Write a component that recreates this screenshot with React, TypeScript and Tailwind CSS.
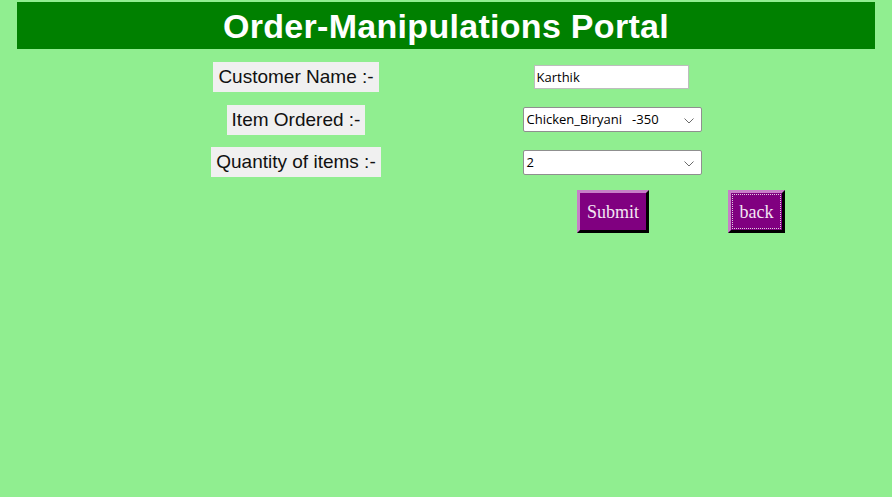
import React from 'react';

const Chevron = () => (
  <svg width="10" height="6" viewBox="0 0 10 6" className="absolute right-[7px] top-[10px]">
    <path d="M0.5 0.5 L5 5 L9.5 0.5" fill="none" stroke="#6b6b6b" strokeWidth="1" />
  </svg>
);

const Label: React.FC<{ text: string }> = ({ text }) => (
  <span className="bg-[#f0f0f0] text-[#111] text-[19px] leading-[30px] h-[30px] px-[5px] font-['Liberation_Sans',Arial,sans-serif]">
    {text}
  </span>
);

const FakeSelect: React.FC<{ value: string }> = ({ value }) => (
  <div className="relative w-[179px] h-[25px] bg-white border border-[#8f8f8f] rounded-[2px] text-[13px] leading-[23px] pl-[3px] text-black font-['Open_Sans','Noto_Sans',sans-serif] whitespace-pre">
    {value}
    <Chevron />
  </div>
);

export default function App() {
  return (
    <div className="min-h-[497px] w-full bg-[#90ee90] pt-[2px]">
      {/* Header */}
      <div className="mx-[17px] h-[47px] bg-[#008000] flex items-center justify-center">
        <h1 className="text-white font-bold text-[34px] leading-none tracking-[0.3px] font-['Liberation_Sans',Arial,sans-serif]">
          Order-Manipulations Portal
        </h1>
      </div>

      <div className="pl-[138px] pt-[13px] grid grid-cols-[316px_316px] gap-y-[12.5px] items-center">
        <div className="flex justify-center"><Label text="Customer Name :-" /></div>
        <div className="flex justify-center">
          <div className="w-[155px] h-[24px] bg-white border border-[#bdbdbd] text-[13px] leading-[22px] pl-[2px] text-black font-['Open_Sans','Noto_Sans',sans-serif] ml-[-2px]">
            Karthik
          </div>
        </div>

        <div className="flex justify-center"><Label text="Item Ordered :-" /></div>
        <div className="flex justify-center"><FakeSelect value="Chicken_Biryani   -350" /></div>

        <div className="flex justify-center"><Label text="Quantity of items :-" /></div>
        <div className="flex justify-center"><FakeSelect value="2" /></div>
      </div>

      <div className="flex pl-[577px] pt-[13px] gap-[79px]">
        <button className="w-[72px] h-[43px] bg-[#800080] border-[3px] border-solid border-t-[#c77fc7] border-l-[#c77fc7] border-b-black border-r-black text-[#f3e6f3] text-[18px] pt-[2px] font-['Liberation_Serif','Times_New_Roman',serif]">
          Submit
        </button>
        <button className="w-[57px] h-[43px] bg-[#800080] border-[3px] border-solid border-t-[#c77fc7] border-l-[#c77fc7] border-b-black border-r-black text-[#f3e6f3] text-[18px] font-['Liberation_Serif','Times_New_Roman',serif] p-[2px]">
          <span className="flex items-center justify-center w-full h-full pt-[2px] outline outline-1 outline-dotted outline-[#e0d0e0]">back</span>
        </button>
      </div>
    </div>
  );
}
